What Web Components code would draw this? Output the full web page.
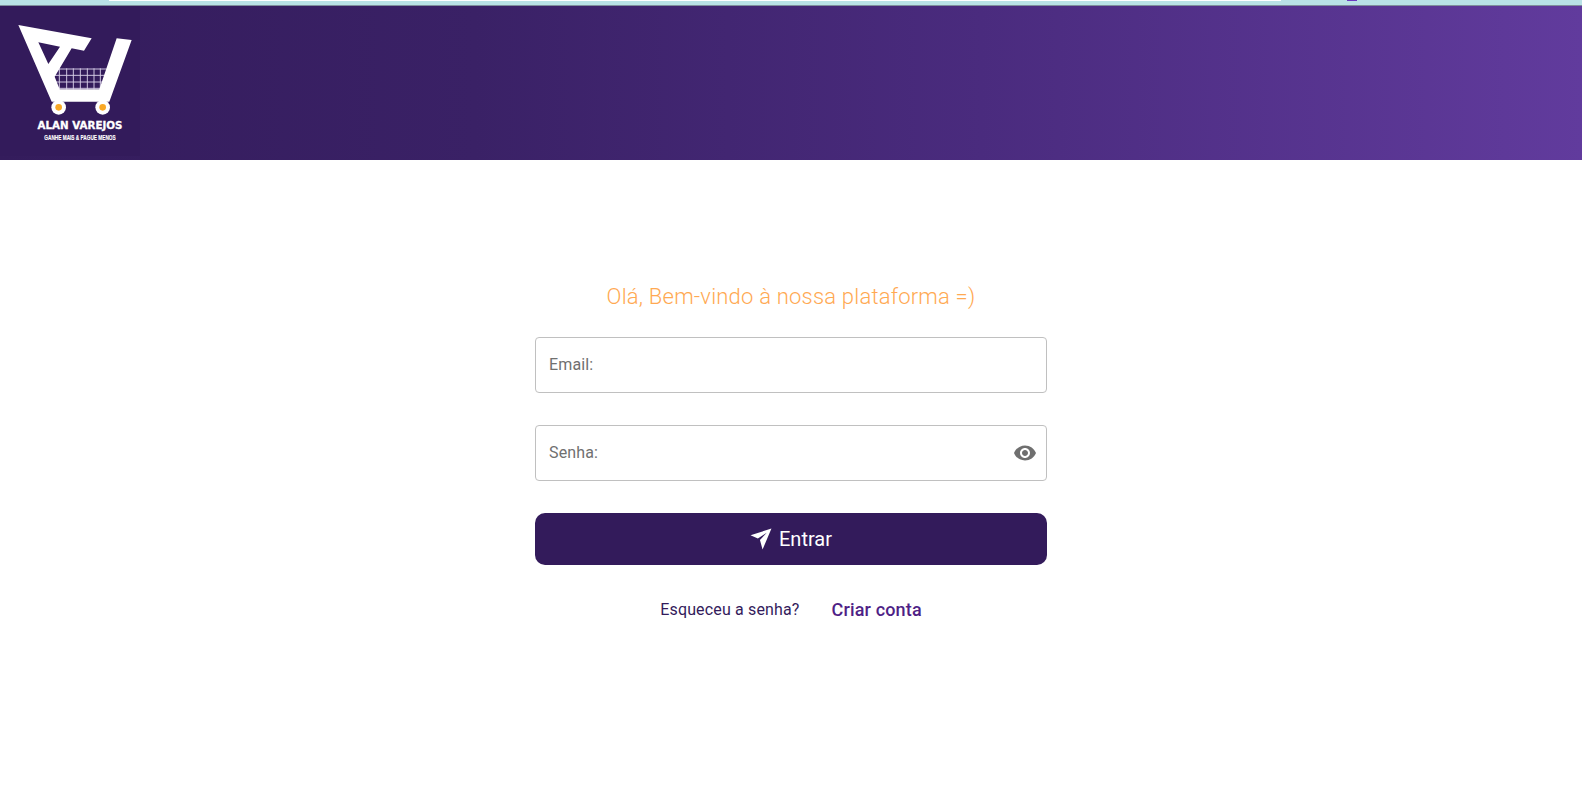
<!DOCTYPE html>
<html lang="pt-BR">
<head>
<meta charset="utf-8">
<title>Alan Varejos</title>
<style>
    html, body { margin: 0; background: #fff; }
    body { font-family: Roboto, "Liberation Sans", sans-serif; }
</style>
</head>
<body>
<top-strip></top-strip>
<app-header><brand-logo></brand-logo></app-header>
<login-page>
    <text-field label="Email:"></text-field>
    <text-field label="Senha:" eye></text-field>
    <send-button>Entrar</send-button>
</login-page>

<script>
(()=>{
    class TopStrip extends HTMLElement {
        connectedCallback() {
            this.attachShadow({ mode: 'open' }).innerHTML = `
<style>
    :host { display: block; height: 6px; background: #b9e2e6; box-sizing: border-box; border-bottom: 1px solid #7f8f9c; }
    .r { display: flex; height: 1px; padding-left: 109px; }
    .w { width: 1172px; background: #fff; }
    .p { width: 10px; margin-left: 66px; background: #6a3bc0; }
</style>
<div class="r"><i class="w"></i><i class="p"></i></div>`;
        }
    }

    class AppHeader extends HTMLElement {
        connectedCallback() {
            this.attachShadow({ mode: 'open' }).innerHTML = `
<style>
    :host { display: block; height: 154px; background: linear-gradient(90deg, #341c5c 0%, #3a2166 30%, #4a2b7e 62%, #613b9d 100%); }
</style>
<slot></slot>`;
        }
    }

    class BrandLogo extends HTMLElement {
        connectedCallback() {
            let grid = '';
            [148, 170, 190, 211, 232, 252, 271].forEach(x => grid += `<path d="M${x} 145V208"/>`);
            [147, 166, 186, 205].forEach(y => grid += `<path d="M130 ${y}H290"/>`);
            this.attachShadow({ mode: 'open' }).innerHTML = `
<style>
    :host { display: flex; flex-direction: column; width: 140px; height: 150px; background: #331b5b; box-sizing: border-box; padding: 14px 0 0 10px; color: #fff; }
    svg { display: block; flex: none; }
    .a, .b { width: 140px; text-align: center; white-space: nowrap; }
    .a { font: 700 10.3px/11px "DejaVu Sans", sans-serif; -webkit-text-stroke: .3px #fff; }
    .b { font: 700 7.5px/8px "Liberation Sans", sans-serif; -webkit-text-stroke: .15px #fff; transform: scaleX(.63); margin-top: 3px; }
</style>
<svg width="130" height="100" viewBox="0 0 390 300">
    <g stroke="#d8d0e8" stroke-width="2.8" fill="none">${grid}</g>
    <path fill="#fff" fill-rule="evenodd" d="M25 15L245 55L222 92L185 85L134 170L149 208L268 208L320 55L365 60L298 245L125 245ZM85 67L150 80L115 132Z"/>
    <circle cx="146" cy="262" r="22" fill="#fff"/>
    <circle cx="146" cy="262" r="10" fill="#f9a825"/>
    <circle cx="278" cy="262" r="22" fill="#fff"/>
    <circle cx="278" cy="262" r="10" fill="#f9a825"/>
</svg>
<div class="a">ALAN VAREJOS</div>
<div class="b">GANHE MAIS &amp; PAGUE MENOS</div>`;
        }
    }

    class LoginPage extends HTMLElement {
        connectedCallback() {
            this.attachShadow({ mode: 'open' }).innerHTML = `
<style>
    :host { display: flex; flex-direction: column; align-items: center; padding-top: 122px; letter-spacing: .00938em; }
    h1 { margin: 0 0 25px; font: 300 22px/30px Roboto, sans-serif; letter-spacing: .00938em; color: #ffa952; }
    .form { display: flex; flex-direction: column; gap: 32px; width: 512px; letter-spacing: 0; }
    .links { display: flex; align-items: center; gap: 32px; margin-top: 32px; height: 24px; color: #331b5b; font-size: 16px; }
    a { color: #4f1f86; font-weight: 500; font-size: 18px; text-decoration: none; }
</style>
<h1>Olá, Bem-vindo à nossa plataforma =)</h1>
<div class="form"><slot></slot></div>
<div class="links"><span>Esqueceu a senha?</span><a href="#">Criar conta</a></div>`;
        }
    }

    class TextField extends HTMLElement {
        connectedCallback() {
            const eye = this.hasAttribute('eye') ? `
<svg width="24" height="24" viewBox="0 0 24 24" fill="#6f6f6f"><path d="M12 4.5C7 4.5 2.73 7.61 1 12c1.73 4.39 6 7.5 11 7.5s9.27-3.11 11-7.5c-1.73-4.39-6-7.5-11-7.5zM12 17c-2.76 0-5-2.24-5-5s2.24-5 5-5 5 2.24 5 5-2.24 5-5 5zm0-8c-1.66 0-3 1.34-3 3s1.34 3 3 3 3-1.34 3-3-1.34-3-3-3z"/></svg>` : '';
            this.attachShadow({ mode: 'open' }).innerHTML = `
<style>
    :host { display: flex; align-items: center; justify-content: space-between; height: 56px; box-sizing: border-box; padding: 0 9px 0 13px; border: 1px solid #c0c0c0; border-radius: 4px; color: #707070; font-size: 16px; letter-spacing: .00938em; background: #fff; }
    span { position: relative; top: -1px; }
    svg { display: block; }
</style>
<span>${this.getAttribute('label')}</span>${eye}`;
        }
    }

    class SendButton extends HTMLElement {
        connectedCallback() {
            this.attachShadow({ mode: 'open' }).innerHTML = `
<style>
    :host { display: flex; align-items: center; justify-content: center; gap: 7px; height: 52px; border-radius: 10px; background: #331b5b; color: #fff; font-size: 20px; }
    svg { display: block; }
</style>
<svg width="22" height="22" viewBox="0 0 21 21" fill="#fff"><path d="M0.5 7L20.5 0.5L12 20.5L9.5 11.5L16 4.5L7.5 10Z"/></svg>
<slot></slot>`;
        }
    }

    customElements.define('top-strip', TopStrip);
    customElements.define('app-header', AppHeader);
    customElements.define('brand-logo', BrandLogo);
    customElements.define('login-page', LoginPage);
    customElements.define('text-field', TextField);
    customElements.define('send-button', SendButton);
})();
</script>
</body>
</html>
